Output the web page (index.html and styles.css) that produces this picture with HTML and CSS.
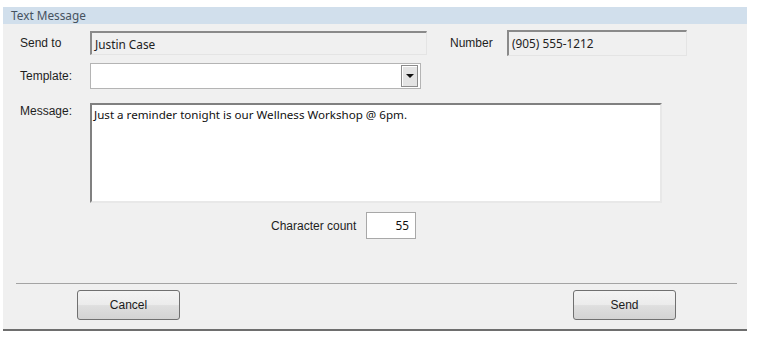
FILE: index.html
```html
<!DOCTYPE html>
<html>
<head>
    <meta charset="UTF-8">
    <title>Text Message</title>
    <link rel="stylesheet" href="styles.css">
</head>
<body>

<div id="dialog">
    <div class="title">Text Message</div>
    <div class="body">
        <div class="row row-first">
            <span class="label">Send to</span>
            <div class="field field-name">Justin Case</div>
            <span class="label label-number">Number</span>
            <div class="field field-number">(905) 555-1212</div>
        </div>
        <div class="row row-template">
            <span class="label">Template:</span>
            <div class="select">
                <span class="select-value"></span>
                <span class="select-btn"><i class="arrow"></i></span>
            </div>
        </div>
        <div class="row row-message">
            <span class="label label-top">Message:</span>
            <div class="memo">Just a reminder tonight is our Wellness Workshop @ 6pm.</div>
        </div>
        <div class="row row-count">
            <span class="label">Character count</span>
            <div class="count">55</div>
        </div>
    </div>
    <div class="footer">
        <a href="javascript:;" class="btn">Cancel</a>
        <a href="javascript:;" class="btn">Send</a>
    </div>
</div>
</body>
</html>
```
FILE: styles.css
```css
body,div{margin:0;padding:0;}
body {
    background: #fff;
    font-family: "Liberation Sans", Arial, sans-serif;
    font-size: 12px;
    color: #1e1e1e;
}
#dialog {
    width: 744px;
    height: 322px;
    margin: 7px 0 0 3px;
    background: #f0f0f0;
    border-bottom: 2px solid #6e6e6e;
    display: flex;
    flex-direction: column;
}
.title {
    flex: none;
    height: 17px;
    line-height: 17px;
    padding-left: 8px;
    background: #d1dfec;
    color: #46525f;
    font-family: "Noto Sans", "Open Sans", sans-serif;
    font-size: 11.8px;
}
.body {
    flex: none;
    padding: 6px 0 0 17px;
    height: 240px;
}
.row {
    display: flex;
    align-items: center;
}
.label {
    width: 70px;
    flex: none;
}
.field {
    height: 24px;
    line-height: 23px;
    box-sizing: border-box;
    border-top: 2px solid #8a8a8a;
    border-left: 2px solid #8a8a8a;
    border-right: 1px solid #e4e4e4;
    border-bottom: 1px solid #e4e4e4;
    padding-left: 3px;
    font-family: "Noto Sans", "Open Sans", sans-serif;
    font-size: 11.8px;
    color: #222;
}
.field-name {
    width: 337px;
}
.label-number {
    width: auto;
    margin: 0 0 0 23px;
    flex: 0 0 57px;
}
.field-number {
    width: 180px;
    height: 26px;
}
.row-template {
    margin-top: 7px;
}
.select {
    width: 331px;
    height: 26px;
    box-sizing: border-box;
    border: 1px solid #b4b4b4;
    background: #fff;
    display: flex;
    justify-content: flex-end;
    align-items: center;
    padding-right: 2px;
}
.select-btn {
    width: 17px;
    height: 22px;
    box-sizing: border-box;
    border: 1px solid #8c8c8c;
    box-shadow: inset 1px 1px 0 #fff;
    background: #e4e4e4;
    display: flex;
    align-items: center;
    justify-content: center;
}
.arrow {
    width: 0;
    height: 0;
    border-left: 4px solid transparent;
    border-right: 4px solid transparent;
    border-top: 4px solid #111;
}
.row-message {
    margin-top: 14px;
    align-items: flex-start;
}
.label-top {
    padding-top: 1px;
}
.memo {
    width: 572px;
    height: 100px;
    box-sizing: border-box;
    background: #fff;
    border-top: 2px solid #808080;
    border-left: 2px solid #808080;
    border-right: 2px solid #e8e8e8;
    border-bottom: 2px solid #e8e8e8;
    padding: 2px 2px;
    font-family: "Noto Sans", "Open Sans", sans-serif;
    font-size: 11.6px;
    line-height: 16px;
    color: #111;
}
.row-count {
    margin-top: 9px;
    padding-left: 251px;
}
.row-count .label {
    width: 95px;
}
.count {
    width: 50px;
    height: 27px;
    line-height: 25px;
    box-sizing: border-box;
    border: 1px solid #a8a8a8;
    background: #fff;
    text-align: right;
    padding-right: 6px;
    font-family: "Noto Sans", "Open Sans", sans-serif;
    font-size: 11.8px;
    color: #111;
}
.footer {
    flex: none;
    margin: 13px 10px 0 13px;
    border-top: 1px solid #a4a4a4;
    padding: 6px 0 0 61px;
    display: flex;
    gap: 393px;
}
.btn {
    display: block;
    width: 103px;
    height: 30px;
    line-height: 28px;
    box-sizing: border-box;
    text-align: center;
    text-decoration: none;
    color: #1b1b1b;
    border: 1px solid #707070;
    border-radius: 3px;
    background: linear-gradient(#f3f3f3 0%, #ececec 48%, #dfdfdf 52%, #d3d3d3 100%);
}
```
